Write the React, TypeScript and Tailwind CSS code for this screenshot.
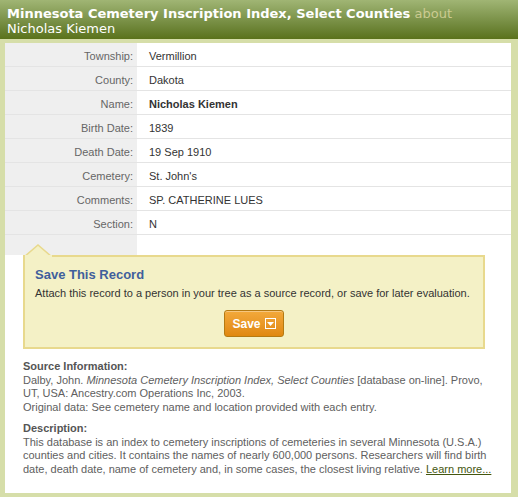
import React from "react";

const rows: { label: string; value: string; bold?: boolean }[] = [
  { label: "Township:", value: "Vermillion" },
  { label: "County:", value: "Dakota" },
  { label: "Name:", value: "Nicholas Kiemen", bold: true },
  { label: "Birth Date:", value: "1839" },
  { label: "Death Date:", value: "19 Sep 1910" },
  { label: "Cemetery:", value: "St. John's" },
  { label: "Comments:", value: "SP. CATHERINE LUES" },
  { label: "Section:", value: "N" },
];

export default function App() {
  return (
    <div className="min-h-[497px] w-[518px] bg-[#d6dea9] pb-[4px] font-['Liberation_Sans',Arial,sans-serif]">
      <div className="h-[39px] bg-gradient-to-b from-[#a0b574] to-[#5a721a] px-[7px] pt-[6px] font-['DejaVu_Sans',sans-serif] text-[13px] leading-[15px] text-white">
        <span className="font-bold">Minnesota Cemetery Inscription Index, Select Counties</span>{" "}
        <span className="text-[#cbcb91]">about</span>
        <br />
        Nicholas Kiemen
      </div>
      <div className="ml-[5px] mr-[7px] mt-[4px] h-[450px] bg-white">
        <div className="grid grid-cols-[132px_1fr] text-[11px]">
          {rows.map((r) => (
            <React.Fragment key={r.label}>
              <div className="flex h-[24px] items-center justify-end border-b border-[#e4e4e4] bg-[#efefef] pr-[4px] pt-[3px] text-[#666]">
                {r.label}
              </div>
              <div
                className={`flex h-[24px] items-center border-b border-[#e4e4e4] pl-[12px] pt-[3px] text-[#333] ${
                  r.bold ? "font-bold" : ""
                }`}
              >
                {r.value}
              </div>
            </React.Fragment>
          ))}
          <div className="h-[20px] bg-[#efefef]" />
          <div className="h-[20px]" />
        </div>

        <div className="relative ml-[18px] mr-[26px] border-2 border-[#e8d98d] bg-[#f4f1c6] px-[10px] pb-[10px] pt-[10px]">
          <svg
            className="absolute left-[-2px] top-[-13px]"
            width="32"
            height="13"
            viewBox="0 0 32 13"
          >
            <polygon points="1,13 15,1 29,13" fill="#f4f1c6" stroke="#e8d98d" strokeWidth="1.5" />
            <rect x="2" y="11" width="27" height="3" fill="#f4f1c6" />
          </svg>
          <div className="text-[13px] font-bold leading-[16px] text-[#3f5f9c]">Save This Record</div>
          <div className="mt-[3px] text-[11px] leading-[14px] text-[#333]">
            Attach this record to a person in your tree as a source record, or save for later evaluation.
          </div>
          <div className="mt-[10px] flex justify-center">
            <button className="flex h-[27px] w-[60px] items-center justify-center gap-[4px] rounded-[3px] border border-[#b57a12] bg-gradient-to-b from-[#f3a93a] to-[#e0880f] text-[12px] font-bold text-white shadow-[inset_0_1px_0_rgba(255,255,255,0.35)]">
              <span>Save</span>
              <span className="flex h-[11px] w-[11px] items-center justify-center border border-white">
                <svg width="7" height="4" viewBox="0 0 7 4">
                  <polygon points="0,0 7,0 3.5,4" fill="#fff" />
                </svg>
              </span>
            </button>
          </div>
        </div>

        <div className="pl-[18px] pr-[14px] pt-[11px] text-[11px] leading-[13.5px] text-[#606060]">
          <div className="font-bold text-[#555]">Source Information:</div>
          <div>
            Dalby, John. <i>Minnesota Cemetery Inscription Index, Select Counties</i> [database on-line]. Provo,
            UT, USA: Ancestry.com Operations Inc, 2003.
          </div>
          <div>Original data: See cemetery name and location provided with each entry.</div>
          <div className="mt-[8px] font-bold text-[#555]">Description:</div>
          <div>
            This database is an index to cemetery inscriptions of cemeteries in several Minnesota (U.S.A.)
            counties and cities. It contains the names of nearly 600,000 persons. Researchers will find birth
            date, death date, name of cemetery and, in some cases, the closest living relative.{" "}
            <a className="text-[#44560f] underline" href="#">
              Learn more...
            </a>
          </div>
        </div>
      </div>
    </div>
  );
}
